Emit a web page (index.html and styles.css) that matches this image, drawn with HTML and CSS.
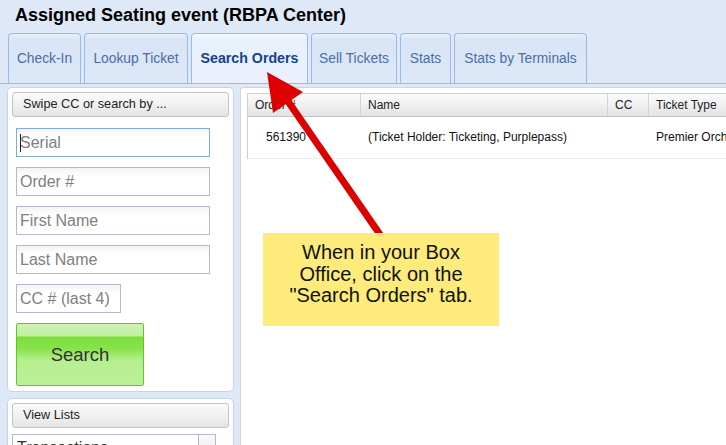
FILE: index.html
```html
<!DOCTYPE html>
<html>
<head>
<meta charset="utf-8">
<link rel="stylesheet" href="styles.css">
</head>
<body>
<div class="page">
  <h1 class="title">Assigned Seating event (RBPA Center)</h1>
  <div class="tabs">
    <div class="tab t1">Check-In</div>
    <div class="tab t2">Lookup Ticket</div>
    <div class="tab t3 active">Search Orders</div>
    <div class="tab t4">Sell Tickets</div>
    <div class="tab t5">Stats</div>
    <div class="tab t6">Stats by Terminals</div>
  </div>
  <div class="content">
    <div class="leftcol">
      <div class="panel">
        <div class="phead">Swipe CC or search by ...</div>
        <div class="form">
          <div class="input focus"><span class="caret"></span>Serial</div>
          <div class="input">Order #</div>
          <div class="input">First Name</div>
          <div class="input">Last Name</div>
          <div class="input short">CC # (last 4)</div>
          <div class="searchbtn"><span>Search</span></div>
        </div>
      </div>
      <div class="panel panel2">
        <div class="phead">View Lists</div>
        <div class="select"><span class="seltext">Transactions</span><span class="trigger"></span></div>
      </div>
    </div>
    <div class="rightpanel">
      <div class="grid">
        <div class="ghead">
          <div class="gc c1">Order #</div>
          <div class="gc c2">Name</div>
          <div class="gc c3">CC</div>
          <div class="gc c4">Ticket Type</div>
        </div>
        <div class="grow">
          <div class="rc c1 num">561390</div>
          <div class="rc c2">(Ticket Holder: Ticketing, Purplepass)</div>
          <div class="rc c3"></div>
          <div class="rc c4">Premier Orchestra</div>
        </div>
      </div>
    </div>
  </div>
  <svg class="arrow" width="726" height="445" viewBox="0 0 726 445">
    <line x1="381" y1="236" x2="285" y2="97" stroke="#dd0000" stroke-width="7"/>
    <polygon points="267,72 303,92 273,113" fill="#dd0000"/>
  </svg>
  <div class="callout">When in your Box Office, click on the "Search Orders" tab.</div>
</div>
</body>
</html>
```
FILE: styles.css
```css
html, body {
  margin: 0;
  padding: 0;
}
body {
  background: #dfe8f6;
  font-family: "Liberation Sans", Arial, sans-serif;
  width: 726px;
  height: 445px;
  overflow: hidden;
}
.page {
  position: relative;
  width: 726px;
  height: 445px;
  overflow: hidden;
}
.title {
  margin: 0;
  height: 33px;
  padding-left: 15px;
  font-size: 18px;
  font-weight: bold;
  line-height: 31px;
  color: #000;
}
.tabs {
  display: flex;
  padding-left: 8px;
  gap: 3px;
  border-bottom: 1px solid #99bbe8;
  box-sizing: border-box;
  height: 51px;
}
.tab {
  box-sizing: border-box;
  height: 50px;
  border: 1px solid #99bbe8;
  border-bottom: none;
  border-radius: 4px 4px 0 0;
  background: linear-gradient(#e6eefa, #d9e5f6 12%, #dce7f8);
  font-size: 13.8px;
  color: #4b6ea2;
  display: flex;
  align-items: center;
  justify-content: center;
  line-height: 1;
  white-space: nowrap;
}
.t1 { width: 73px; }
.t2 { width: 104px; }
.t3 { width: 117px; }
.t4 { width: 86px; }
.t5 { width: 51px; }
.t6 { width: 133px; }
.tab.active {
  background: linear-gradient(#f4f8fe, #e8f0fb 12%, #eaf1fc);
  font-weight: bold;
  color: #15428b;
  font-size: 14.2px;
}
.content {
  display: flex;
  gap: 6px;
  padding: 3px 0 0 7px;
}
.leftcol {
  width: 227px;
  flex: none;
  display: flex;
  flex-direction: column;
  gap: 6px;
}
.panel {
  background: #fff;
  border: 1px solid #c7d4e6;
  border-radius: 5px;
  padding: 4px 4px 5px 4px;
}
.phead {
  height: 25px;
  box-sizing: border-box;
  border: 1px solid #c4c4c4;
  border-radius: 3px;
  background: linear-gradient(#fbfbfb, #f1f1f1 50%, #e4e4e4);
  font-size: 12.7px;
  line-height: 23px;
  padding-left: 10px;
  color: #222;
}
.form {
  display: flex;
  flex-direction: column;
  gap: 10px;
  padding: 11px 0 0 4px;
}
.input {
  position: relative;
  width: 194px;
  height: 29px;
  box-sizing: border-box;
  border: 1px solid #b5b8c8;
  background: linear-gradient(#f3f3f3, #fff 30%);
  font-size: 16px;
  line-height: 27px;
  padding-left: 3px;
  color: #808080;
}
.input.focus {
  border-color: #7eadd9;
}
.caret {
  position: absolute;
  left: 3px;
  top: 5px;
  width: 1px;
  height: 18px;
  background: #222;
}
.input.short {
  width: 105px;
}
.searchbtn {
  width: 128px;
  height: 63px;
  box-sizing: border-box;
  border: 1px solid #5fc52c;
  border-radius: 2px;
  background: linear-gradient(#ccf3b1 0, #c2efa3 20%, #7ddf3a 21%, #86e34a 40%, #b6ef90 60%, #bcf098 100%);
  display: flex;
  align-items: center;
  justify-content: center;
  font-size: 18.5px;
  color: #333;
}
.panel2 {
  padding-bottom: 20px;
}
.select {
  margin-top: 6px;
  width: 204px;
  height: 28px;
  box-sizing: border-box;
  border: 1px solid #b5b8c8;
  display: flex;
  position: relative;
}
.seltext {
  flex: 1;
  font-size: 16px;
  line-height: 26px;
  padding-left: 4px;
  color: #333;
}
.trigger {
  width: 16px;
  border-left: 1px solid #b5b8c8;
  background: linear-gradient(#fafafa, #e6e6e6);
}
.rightpanel {
  flex: 1;
  height: 400px;
  background: #fff;
  border: 1px solid #cfd6de;
  border-right: none;
  border-radius: 4px 0 0 0;
  padding: 5px 0 0 6px;
}
.grid {
  border-left: 1px solid #d0d0d0;
}
.ghead {
  display: flex;
  height: 24px;
  box-sizing: border-box;
  background: linear-gradient(#fbfbfb, #f0f0f0 50%, #e2e3e5);
  border-top: 1px solid #d0d0d0;
  border-bottom: 1px solid #c5c5c5;
}
.gc {
  box-sizing: border-box;
  font-size: 12px;
  line-height: 22px;
  padding-left: 7px;
  color: #222;
  border-right: 1px solid #d4d4d4;
  white-space: nowrap;
}
.c1 { width: 113px; flex: none; }
.c2 { width: 247px; flex: none; }
.c3 { width: 41px; flex: none; }
.c4 { width: 120px; flex: none; border-right: none; }
.grow {
  display: flex;
  height: 42px;
  box-sizing: border-box;
  border-bottom: 1px solid #ededed;
}
.rc {
  box-sizing: border-box;
  font-size: 12px;
  line-height: 41px;
  padding-left: 7px;
  color: #111;
  white-space: nowrap;
  overflow: hidden;
}
.rc.num {
  padding-left: 18px;
}
.arrow {
  position: absolute;
  left: 0;
  top: 0;
  pointer-events: none;
}
.callout {
  position: absolute;
  left: 263px;
  top: 233px;
  width: 236px;
  height: 93px;
  box-sizing: border-box;
  background: #fdeb7b;
  font-size: 20px;
  line-height: 21.7px;
  text-align: center;
  padding: 9px 22px 0 22px;
  color: #111;
}
```
